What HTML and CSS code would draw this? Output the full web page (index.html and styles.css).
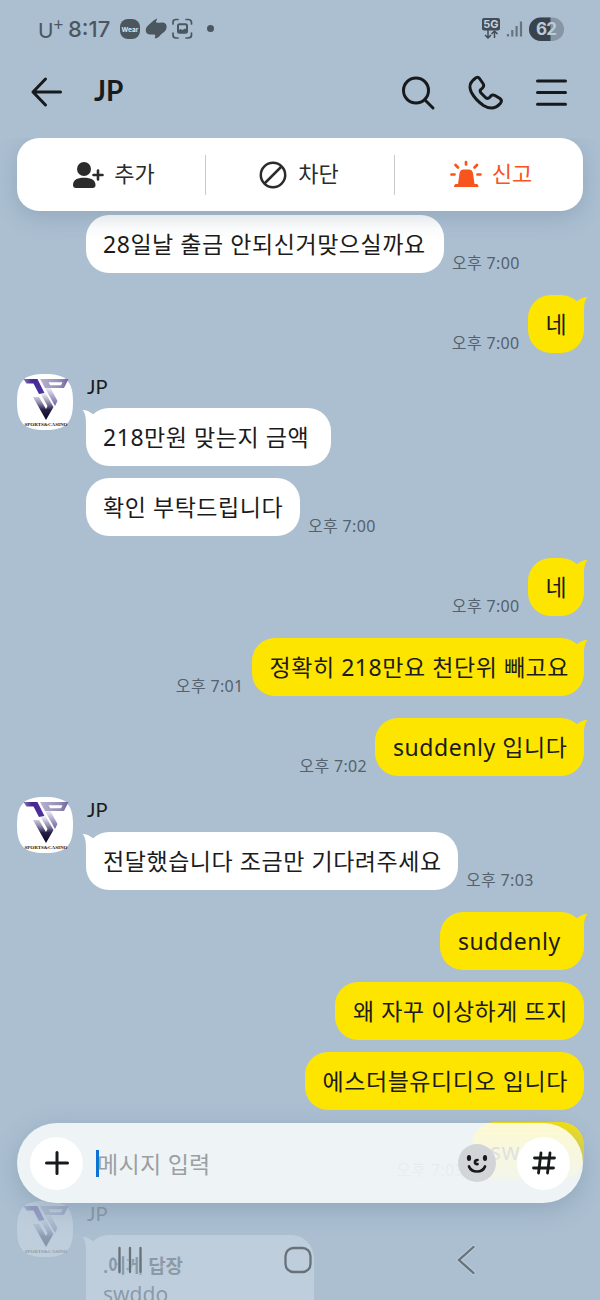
FILE: index.html
```
<!DOCTYPE html>
<html lang="ko">
<head>
<meta charset="utf-8">
<title>JP</title>
<link rel="stylesheet" href="styles.css">
</head>
<body>
<svg class="defs" width="0" height="0">
  <defs>
    <linearGradient id="arm" x1="0" y1="0" x2="1" y2="0"><stop offset="0" stop-color="#8a78b4"/><stop offset=".4" stop-color="#46258f"/><stop offset="1" stop-color="#4a35a0"/></linearGradient>
    <linearGradient id="bowl" x1="0" y1="0" x2="1" y2="0"><stop offset="0" stop-color="#b8b3cf"/><stop offset=".7" stop-color="#938bb5"/><stop offset="1" stop-color="#6c61a0"/></linearGradient>
    <linearGradient id="stem" gradientUnits="userSpaceOnUse" x1="0" y1="14" x2="0" y2="32"><stop offset="0" stop-color="#eceaf4"/><stop offset=".5" stop-color="#a9a2c9"/><stop offset="1" stop-color="#6c639c"/></linearGradient>
    <linearGradient id="vee" gradientUnits="userSpaceOnUse" x1="0" y1="20" x2="0" y2="46"><stop offset="0" stop-color="#eceaf3"/><stop offset=".35" stop-color="#8d88ab"/><stop offset=".6" stop-color="#252047"/><stop offset="1" stop-color="#08051f"/></linearGradient>
    <symbol id="avatar" viewBox="0 0 56 56">
      <path d="M28 0C49 0 56 7 56 28S49 56 28 56 0 49 0 28 7 0 28 0Z" fill="#fff"/>
      <path d="M6.500 5H20.500L27.500 19 22 20 16.500 9.500H9.500Z" fill="url(#arm)"/>
      <path d="M23 5H51.500L47 14H28Z" fill="url(#bowl)"/>
      <path d="M31.500 8.300H45.500L44 11.300H33.200Z" fill="#fff"/>
      <path d="M28 14H33.500L40.500 27 38 32Z" fill="url(#stem)"/>
      <path d="M16 23H22L29 35 30.500 32 24 20.500 28.500 19 36.500 33 29 46Z" fill="url(#vee)"/>
      <text x="7.500" y="52.300" textLength="43" lengthAdjust="spacingAndGlyphs" class="brand">SPORTS&amp;CASINO</text>
    </symbol>
    <symbol id="tail-in" viewBox="0 0 16 26"><path d="M0.500 2C5 2 8 4 11.200 6.300L16 14 8 26 4 25V18C4 10 3.500 5 .500 2Z" fill="#fff"/></symbol>
    <symbol id="tail-out" viewBox="0 0 16 26"><path d="M15.500 2C11 2 8 4 4.800 6.300L0 14 8 26 12 25V18C12 10 12.500 5 15.500 2Z" fill="#fee500"/></symbol>
  </defs>
</svg>
<div class="phone">
  <div class="top">
    <div class="status">
      <span class="carrier">U<sup>+</sup></span>
      <span class="clock">8:17</span>
      <svg class="status-icons" width="100" height="24" viewBox="0 0 100 24">
        <g fill="#4b565f"><rect x="0" y="2" width="20" height="20" rx="8"/>
        <path d="M37 1.500C33 3 30.500 6.500 27.500 9C24.500 12 25.500 17 29.500 17.500C32 17.800 34 17 35 18C36 19.500 34 20.500 35.500 21.500C39.500 20.500 40 17.500 43.500 15.500C48 12.500 47.500 6 43 5.500C40.500 5 38.500 6.500 36.500 5.500C35 4.500 37.500 3 37 1.500Z"/>
        <circle cx="90.500" cy="11.500" r="3.500"/></g>
        <text x="10" y="14.500" text-anchor="middle" class="wear">Wear</text>
        <g fill="none" stroke="#4b565f" stroke-width="1.700" stroke-linecap="round"><path d="M53 7V5Q53 2.500 56 2.500H58M66 2.500H68Q71.500 2.500 71.500 5.500V7M71.500 16V18Q71.500 21 68 21H66M58 21H56Q53 21 53 18V16"/><rect x="58" y="7.300" width="9" height="8.500" rx="1.500" stroke-width="2"/></g>
        <path d="M58 15.500V13.500L60.500 12 62.500 13 65 11.500 67 13V16H58Z" fill="#4b565f"/>
      </svg>
      <svg class="signal" width="84" height="26" viewBox="0 0 84 26">
        <rect x="1" y="2" width="18" height="12.500" rx="2" fill="#424d56"/>
        <text x="10" y="12.200" text-anchor="middle" class="fiveg">5G</text>
        <path d="M7 14V21.500M4 19L7 22 10 19M13.500 22V15.500M10.500 18L13.500 15 16.500 18" fill="none" stroke="#424d56" stroke-width="1.500"/>
        <path d="M27 18V20.500M31.300 14V20.500M35.600 10V20.500M40 5.500V20.500" stroke="#66747f" stroke-width="2.200"/>
        <clipPath id="pill"><rect x="48" y="1.500" width="35" height="23.500" rx="11.750"/></clipPath>
        <g clip-path="url(#pill)"><rect x="48" width="36" height="26" fill="#8696a4"/><rect x="48" width="21.500" height="26" fill="#39434c"/></g>
        <text x="65.500" y="19.300" text-anchor="middle" textLength="21" class="battery">62</text>
      </svg>
    </div>
    <div class="header">
      <svg width="34" height="34" viewBox="0 0 34 34" class="stroke"><path d="M30.500 17H3M15.500 4L3 17 15.500 30"/></svg>
      <h1>JP</h1>
      <svg class="tools" width="168" height="38" viewBox="0 0 168 38">
        <g class="stroke"><circle cx="16" cy="17.500" r="12.500"/><path d="M25 27L33 35"/>
        <path d="M75.300 5.300Q77.500 3 79.500 5.500L83 10.500Q84.600 13 82.500 15L80.500 16.800Q79.600 17.800 81 20L86 25Q88 26 89.500 24.500L91 22.800Q92.500 21.200 95 22.500L100 25.500Q102.500 27.500 100.500 30.200C95.500 36 90 36.500 83.500 32.500Q75.500 27 71.500 19.500C68.500 13.500 69.500 9.500 75.300 5.300Z"/>
        <path d="M137.500 8H165.500M137.500 19.500H165.500M137.500 31.300H165.500"/></g>
      </svg>
    </div>
  </div>

  <div class="actions">
    <div class="action"><svg width="34" height="32" viewBox="0 0 34 32"><g fill="#2b2b2b"><circle cx="13" cy="10" r="7"/><path d="M2 26C2 20 8 18.800 13 18.800S24.500 20 24.500 26Q24.500 29 21.500 29H5Q2 29 2 26Z"/></g><path d="M22.500 16H31.500M27 11.500V20.500" stroke="#2b2b2b" stroke-width="2.600" stroke-linecap="round"/></svg><span>추가</span></div>
    <div class="action block"><svg width="32" height="32" viewBox="0 0 32 32" fill="none" stroke="#2b2b2b" stroke-width="2.500"><circle cx="16" cy="16" r="12.200"/><path d="M7.500 24.500L24.500 7.500"/></svg><span>차단</span></div>
    <div class="action report"><svg width="34" height="32" viewBox="0 0 34 32"><path d="M9 25L10.500 14.500Q11 10.500 14.500 10.500H20Q23.500 10.500 24 14.500L25.500 25H28Q29.500 25.500 29.500 28H5Q5 25.500 6.500 25Z" fill="#f7541e"/><path d="M17 3V5.500M6.500 6L9 8.500M28 6L25.500 8.500M2.500 15.500H5.500M28.500 15.500H31.500" stroke="#f7541e" stroke-width="2.700" stroke-linecap="round"/></svg><span>신고</span></div>
  </div>

  <div class="chat">
    <div class="row in"><div class="bubble b1">28일날 출금 안되신거맞으실까요</div><time>오후 7:00</time></div>
    <div class="row out"><time>오후 7:00</time><div class="bubble b2">네<svg class="tail"><use href="#tail-out"/></svg></div></div>
    <div class="group">
      <svg class="avatar"><use href="#avatar"/></svg>
      <div class="name">JP</div>
      <div class="row in tight"><div class="bubble b3">218만원 맞는지 금액<svg class="tail"><use href="#tail-in"/></svg></div></div>
      <div class="row in"><div class="bubble b4">확인 부탁드립니다</div><time>오후 7:00</time></div>
    </div>
    <div class="row out"><time>오후 7:00</time><div class="bubble b2">네<svg class="tail"><use href="#tail-out"/></svg></div></div>
    <div class="row out"><time>오후 7:01</time><div class="bubble b5">정확히 218만요 천단위 빼고요<svg class="tail"><use href="#tail-out"/></svg></div></div>
    <div class="row out"><time>오후 7:02</time><div class="bubble b6">suddenly 입니다<svg class="tail"><use href="#tail-out"/></svg></div></div>
    <div class="group">
      <svg class="avatar"><use href="#avatar"/></svg>
      <div class="name">JP</div>
      <div class="row in"><div class="bubble b7">전달했습니다 조금만 기다려주세요<svg class="tail"><use href="#tail-in"/></svg></div><time>오후 7:03</time></div>
    </div>
    <div class="row out tight"><div class="bubble b8">suddenly<svg class="tail"><use href="#tail-out"/></svg></div></div>
    <div class="row out tight"><div class="bubble b9">왜 자꾸 이상하게 뜨지</div></div>
    <div class="row out tight"><div class="bubble b10">에스더블유디디오 입니다</div></div>
    <div class="row out"><time>오후 7:03</time><div class="bubble b11">swddo</div></div>
    <div class="group">
      <svg class="avatar"><use href="#avatar"/></svg>
      <div class="name">JP</div>
      <div class="row in"><div class="bubble b12"><b>.에게 답장</b><span>swddo</span><svg class="tail"><use href="#tail-in"/></svg></div></div>
    </div>
  </div>

  <div class="fade"></div>
  <div class="composer">
    <div class="round"><svg width="28" height="28" viewBox="0 0 28 28" class="stroke"><path d="M3.500 14H24.500M14 3.500V24.500"/></svg></div>
    <div class="field"><i class="caret"></i>메시지 입력</div>
    <svg class="emoji" width="38" height="38" viewBox="0 0 38 38"><circle cx="19" cy="19" r="19" fill="#d2d5d7"/><ellipse cx="11" cy="14" rx="2.100" ry="3" fill="#17191b"/><ellipse cx="27" cy="14" rx="2.100" ry="3" fill="#17191b"/><path d="M19.500 16Q17 16 17 18.200T19.500 20.200M11 22.500Q13 27.500 19 27.500T27 22.500" fill="none" stroke="#17191b" stroke-width="2.700" stroke-linecap="round"/></svg>
    <div class="round"><svg width="28" height="28" viewBox="0 0 28 28" class="stroke hash"><path d="M11 4L8.500 24M20 4L17.500 24M4.500 9H24.500M3.500 19H23.500"/></svg></div>
  </div>
  <svg class="nav" width="600" height="40" viewBox="0 0 600 40">
    <g fill="none" stroke="#c1d0dc" stroke-width="4.500" stroke-linecap="round" opacity=".6"><path d="M119.500 8V32M130 8V32M140.500 8V32M473.500 7L459 20 473.500 33"/><rect x="285.500" y="8" width="25" height="24" rx="8"/></g>
    <g fill="none" stroke="#67727b" stroke-width="2.300" stroke-linecap="round"><path d="M119.500 8V32M130 8V32M140.500 8V32M473.500 7L459 20 473.500 33"/><rect x="285.500" y="8" width="25" height="24" rx="8"/></g>
  </svg>
</div>
</body>
</html>
```
FILE: styles.css
```
* { box-sizing: border-box; }
body { margin: 0; font-family: "Noto Sans", "Noto Sans CJK KR", sans-serif; color: #1b1b1b; }
.defs { position: absolute; }
.phone { position: relative; width: 600px; height: 1300px; overflow: hidden; background: #abbfd1; }
.stroke { fill: none; stroke: #17191b; stroke-width: 3; stroke-linecap: round; stroke-linejoin: round; }
.brand { font: bold 5px "Liberation Serif", serif; fill: #111; }

.top { position: relative; z-index: 3; height: 139px; background: #abbfd1; }
.status { display: flex; align-items: center; height: 58px; padding: 0 35px 0 38px; color: #4b565f; }
.carrier { width: 30px; font: 400 21px Lato, sans-serif; }
.carrier sup { font-size: 17px; line-height: 0; vertical-align: 7px; }
.clock { width: 52px; font: 500 22px Inter, sans-serif; }
.status-icons { flex: none; }
.wear { font: bold 6.500px Inter, sans-serif; fill: #dce5ec; }
.signal { margin-left: auto; }
.fiveg { font: bold 11px Inter, sans-serif; fill: #c5d3df; }
.battery { font: bold 17px Inter, sans-serif; fill: #b9cad8; }
.header { display: flex; align-items: center; height: 67px; padding: 0 32px 0 30px; }
.header h1 { margin: -3px 0 0 30px; font: bold 28px Lato, sans-serif; }
.tools { margin-left: auto; }

.actions { position: relative; z-index: 3; display: flex; align-items: center; width: 566px; height: 73px; margin: -1px 17px 0; background: #fff; border-radius: 22px; box-shadow: 0 6px 22px rgba(70, 95, 118, .23); clip-path: inset(0 -40px -40px -40px); }
.action { flex: none; width: 188px; display: flex; align-items: center; justify-content: center; gap: 9px; height: 40px; font-size: 22px; color: #2b2b2b; padding-left: 4px; }
.action + .action { border-left: 1px solid #c9c9c9; }
.action.block { width: 189px; padding-left: 0; padding-right: 4px; }
.action span { line-height: 30px; margin-top: -3px; }
.report { padding-left: 4px; color: #f7541e; }

.chat { display: flex; flex-direction: column; padding: 4px 16px 0 86px; }
.row { display: flex; align-items: flex-end; gap: 8px; height: 58px; margin-bottom: 22px; flex: none; }
.tight { margin-bottom: 12px; }
.out { justify-content: flex-end; }
.bubble { position: relative; height: 58px; padding: 0 17px; border-radius: 23px; font-size: 23px; letter-spacing: .55px; line-height: 58px; white-space: nowrap; background: #fff; flex: none; }
.out .bubble { padding: 0 18px; background: #fee500; }
time { font-size: 16px; letter-spacing: .33px; line-height: 20px; color: #55616c; white-space: nowrap; }
.tail { position: absolute; top: 0; left: -4px; width: 16px; height: 26px; }
.out .tail { left: auto; right: -4px; }
.group { position: relative; }
.avatar { position: absolute; left: -69px; top: -1px; width: 56px; height: 56px; }
.name { height: 33.400px; padding: 0 0 0 1px; font: 20px/23px Lato, sans-serif; }
.b1 { width: 358px; }
.b2 { width: 56.500px; }
.b3 { width: 245px; }
.b4 { width: 214px; }
.b5 { width: 332.500px; }
.b6 { width: 209px; }
.b7 { width: 372px; }
.b8 { width: 144px; }
.b9 { width: 249px; }
.b10 { width: 279.500px; }
.b11 { width: 112px; }
.bubble.b12 { width: 228px; height: 100px; padding-top: 17px; letter-spacing: 0; line-height: 28px; align-self: flex-start; }
.b12 b, .b12 span { display: block; }
.b12 b { font-size: 19px; font-weight: 600; }
.b12 span { font-size: 21px; }

.fade { position: absolute; left: 0; right: 0; top: 1115px; bottom: 0; background: linear-gradient(rgba(171, 191, 209, 0), rgba(171, 191, 209, .77) 70px); }
.composer { position: absolute; left: 17px; top: 1123px; display: flex; align-items: center; width: 566px; height: 80px; padding: 0 13px; border-radius: 40px; background: rgba(254, 255, 254, .81); box-shadow: 0 6px 24px rgba(70, 95, 118, .25); }
.round { display: flex; align-items: center; justify-content: center; width: 53px; height: 53px; border-radius: 50%; background: #fff; }
.field { flex: 1; display: flex; align-items: center; padding-left: 13px; font-size: 23px; letter-spacing: .3px; color: #9a9fa3; }
.caret { width: 3px; height: 27px; margin-right: -2px; background: #0b70d8; }
.emoji { margin-right: 21px; }
.hash { stroke-width: 2.800; }
.nav { position: absolute; left: 0; top: 1240px; }
```
